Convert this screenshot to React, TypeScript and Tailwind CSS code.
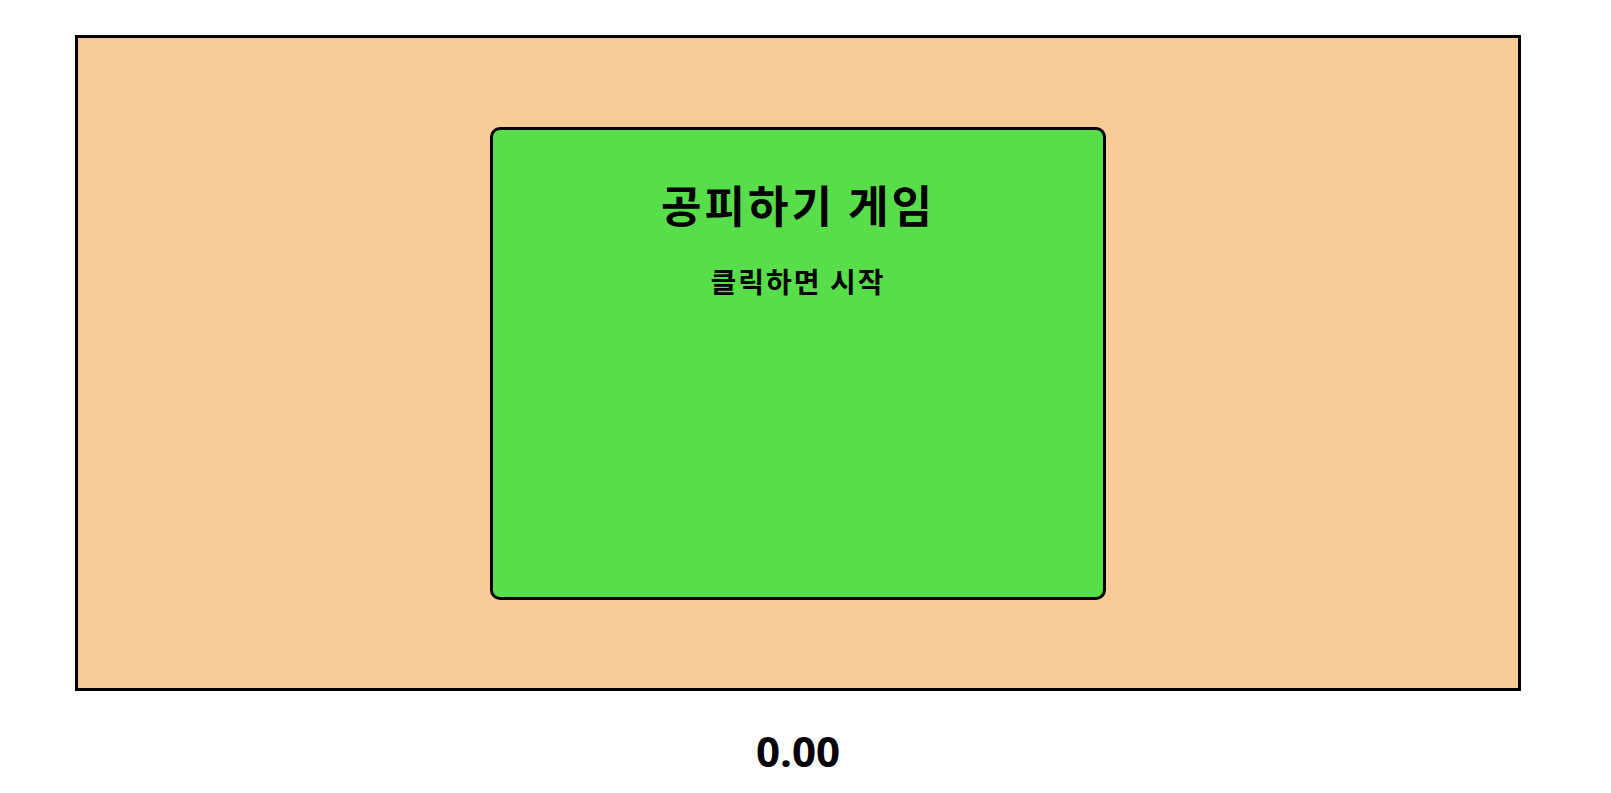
import React from "react";

const font = {
  fontFamily: '"Noto Sans CJK KR", "Noto Sans", sans-serif',
};

export default function App() {
  const [time] = React.useState(0);

  return (
    <div className="w-[1596px] min-h-screen bg-white pt-[35px] flex flex-col items-center" style={font}>
      <div className="w-[1446px] h-[656px] border-[3px] border-black bg-[#f8cb97] flex items-center justify-center">
        <div className="w-[616px] h-[473px] rounded-[10px] border-[3px] border-black bg-[#59de4b] flex flex-col items-center pt-[52px]">
          <h1 className="text-[44px] leading-none font-bold tracking-[3px] text-black">공피하기 게임</h1>
          <p className="mt-[41px] text-[28px] leading-none font-bold tracking-[2px] text-black">클릭하면 시작</p>
        </div>
      </div>
      <div
        className="mt-[39px] text-[42px] leading-none font-bold text-black"
        style={{ fontFamily: '"Open Sans", sans-serif' }}
      >
        {time.toFixed(2)}
      </div>
    </div>
  );
}
